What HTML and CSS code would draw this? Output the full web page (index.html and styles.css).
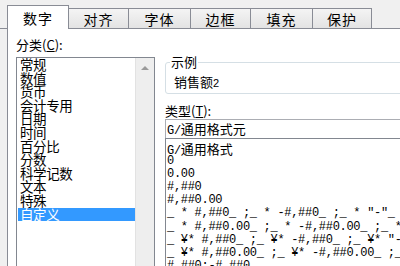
FILE: index.html
```html
<!DOCTYPE html>
<html>
<head>
<meta charset="utf-8">
<link rel="stylesheet" href="styles.css">
</head>
<body>

<div class="tabs">
  <div class="tab active" style="width:62px">数字</div>
  <div class="tab" style="width:61px">对齐</div>
  <div class="tab" style="width:63px">字体</div>
  <div class="tab" style="width:61px">边框</div>
  <div class="tab" style="width:63px">填充</div>
  <div class="tab" style="width:60px">保护</div>
</div>

<div class="panel">
  <div class="left">
    <div class="label">分类(<u>C</u>):</div>
    <div class="catbox">
      <ul class="cats">
        <li>常规</li>
        <li>数值</li>
        <li>货币</li>
        <li>会计专用</li>
        <li>日期</li>
        <li>时间</li>
        <li>百分比</li>
        <li>分数</li>
        <li>科学记数</li>
        <li>文本</li>
        <li>特殊</li>
        <li class="sel">自定义</li>
      </ul>
      <div class="scroll"><span class="arrow"></span></div>
    </div>
  </div>

  <div class="right">
    <fieldset class="sample">
      <legend>示例</legend>
      <div class="sample-text">销售额<span class="num">2</span></div>
    </fieldset>
    <div class="label type-label">类型(<u>T</u>):</div>
    <div class="typein">G/<span class="cjk">通用格式元</span></div>
    <ul class="types">
      <li>G/<span class="cjk">通用格式</span></li>
      <li>0</li>
      <li>0.00</li>
      <li>#,##0</li>
      <li>#,##0.00</li>
      <li>_ * #,##0_ ;_ * -#,##0_ ;_ * "-"_ ;_ @_ </li>
      <li>_ * #,##0.00_ ;_ * -#,##0.00_ ;_ * "-"??_ ;_ @_ </li>
      <li>_ ¥* #,##0_ ;_ ¥* -#,##0_ ;_ ¥* "-"_ ;_ @_ </li>
      <li>_ ¥* #,##0.00_ ;_ ¥* -#,##0.00_ ;_ ¥* "-"??_ ;_ @_ </li>
      <li>#,##0;-#,##0</li>
    </ul>
  </div>
</div>

</body>
</html>
```

FILE: styles.css
```css
* {
  box-sizing: border-box;
}

body {
  margin: 0;
  width: 400px;
  height: 266px;
  overflow: hidden;
  background: #f0f0f0;
  font-family: "Noto Sans CJK SC", sans-serif;
  color: #000;
}

/* Tab strip */
.tabs {
  display: flex;
  align-items: flex-end;
  height: 29px;
  padding-left: 7px;
  border-bottom: 1px solid #898c95;
}

.tab {
  height: 20px;
  margin-left: -1px;
  padding-top: 3px;
  border: 1px solid #898c95;
  border-bottom: none;
  background: linear-gradient(#f4f4f4, #e3e3e3);
  font-size: 14px;
  line-height: 14px;
  letter-spacing: 1px;
  text-align: center;
}

.tab.active {
  height: 24px;
  margin-left: 0;
  margin-bottom: -1px;
  padding-top: 5px;
  background: #fff;
  position: relative;
  z-index: 1;
}

/* Page under the tabs */
.panel {
  display: flex;
  gap: 10px;
  height: 240px;
  margin-left: 7px;
  padding-left: 8px;
  border-left: 1px solid #898c95;
  background: #fff;
  overflow: hidden;
}

.label {
  font-size: 13px;
  line-height: 14px;
  height: 14px;
  white-space: nowrap;
}

.label u {
  text-decoration-thickness: 1px;
}

.left {
  width: 139px;
  flex: none;
}

.left .label {
  margin: 9px 0 5px;
}

.catbox {
  display: flex;
  height: 230px;
  border: 1px solid #828790;
}

.cats {
  flex: 1;
  margin: 0;
  padding: 0 0 0 1px;
  list-style: none;
  font-size: 13.5px;
  line-height: 13.6px;
  letter-spacing: -0.4px;
}

.cats li {
  height: 13.6px;
  padding-left: 2px;
  white-space: nowrap;
}

.cats li.sel {
  background: #3399ff;
  color: #fff;
}

.scroll {
  width: 19px;
  background: #eeeeee;
  border-left: 1px solid #e2e2e2;
  display: flex;
  justify-content: center;
  padding-top: 8px;
}

.arrow {
  width: 0;
  height: 0;
  border-left: 4px solid transparent;
  border-right: 4px solid transparent;
  border-bottom: 4px solid #9a9a9a;
}

/* Right side */
.right {
  width: 260px;
  flex: none;
}

.sample {
  margin: 26px 0 0;
  padding: 6px 6px 3px 4px;
  border: 1px solid #d5dfe5;
  border-radius: 3px;
}

.sample legend {
  padding: 0 1px;
  font-size: 13px;
  line-height: 14px;
}

.sample-text {
  padding-left: 4px;
  font-size: 13px;
  line-height: 14px;
}

.sample-text .num {
  font-family: "Liberation Sans", sans-serif;
  font-size: 11px;
}

.type-label {
  margin: 10px 0 1px;
}

.typein {
  height: 19px;
  padding-left: 1px;
  border: 1px solid #abadb3;
  border-bottom: none;
  font-family: "Liberation Mono", monospace;
  font-size: 12px;
  line-height: 17px;
  letter-spacing: -0.3px;
  white-space: nowrap;
}

.cjk {
  font-family: "Noto Sans CJK SC", sans-serif;
  font-size: 13px;
  letter-spacing: 0;
}

.types {
  height: 140px;
  margin: 0;
  padding: 3px 0 0 1px;
  list-style: none;
  border: 1px solid #828790;
  font-family: "Liberation Mono", monospace;
  font-size: 12px;
  line-height: 13.1px;
  letter-spacing: -0.3px;
}

.types li {
  height: 13.1px;
  white-space: pre;
}
```
